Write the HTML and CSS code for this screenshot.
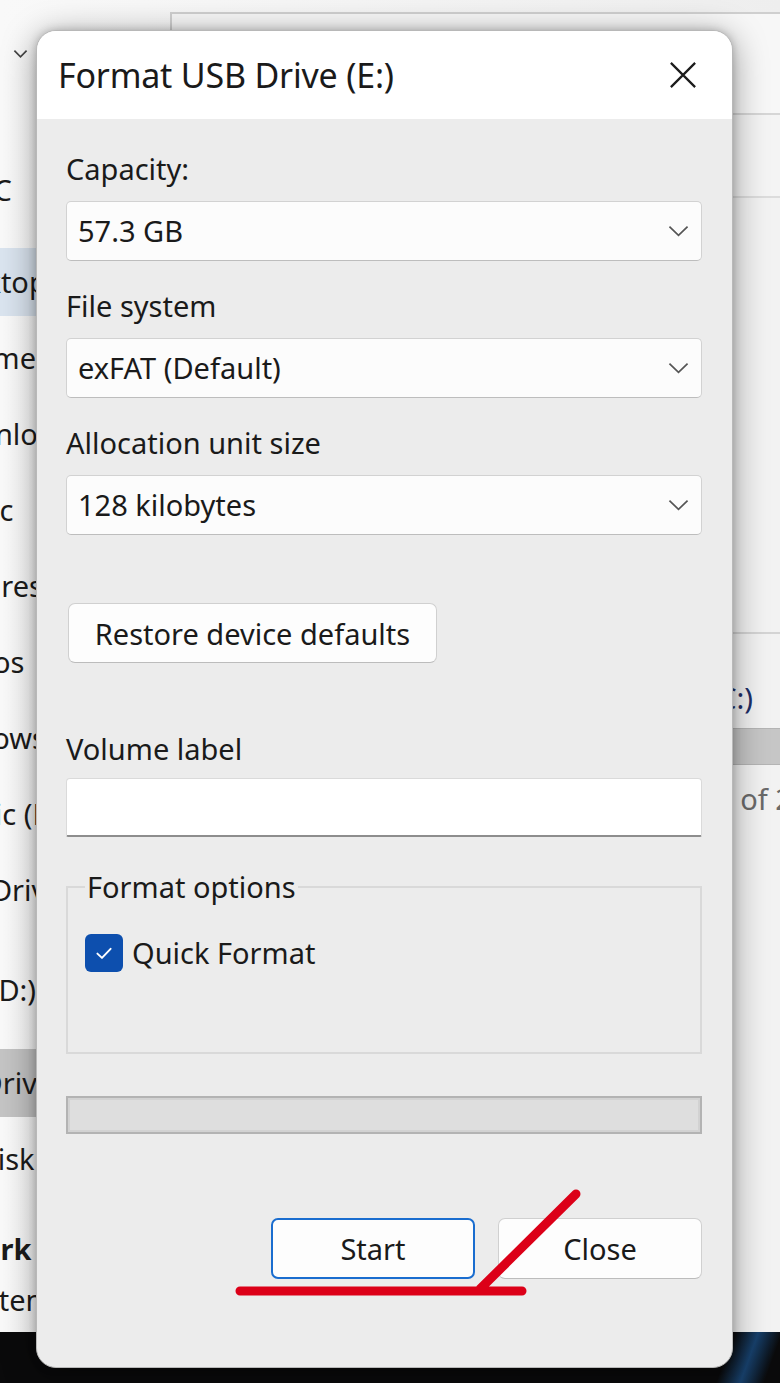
FILE: index.html
```html
<!DOCTYPE html>
<html>
  <head>
    <meta charset="utf-8" />
    <link rel="stylesheet" href="styles.css">
  </head>
  <body>
    <div class="screen">
      <div class="explorer">
        <div class="ex-main">
          <nav class="sidebar">
            <div class="nav-chev">
              <svg viewBox="0 0 16 10"><path d="M1.5 1.5L8 8l6.5-6.5" /></svg>
            </div>
            <div class="nav-item first pull-l">This PC</div>
            <div class="nav-item selected">Desktop</div>
            <div class="nav-item pull-s">Documents</div>
            <div class="nav-item">Downloads</div>
            <div class="nav-item">Music</div>
            <div class="nav-item">Pictures</div>
            <div class="nav-item">Videos</div>
            <div class="nav-item pull-s">Windows (C:)</div>
            <div class="nav-item">Public (D:)</div>
            <div class="nav-item">OneDrive</div>
            <div class="nav-gap"></div>
            <div class="nav-item pull-m">Data (D:)</div>
            <div class="nav-gap small"></div>
            <div class="nav-item current pull-m">USB Drive (E:)</div>
            <div class="nav-item pull-l">USB Disk</div>
            <div class="nav-gap small"></div>
            <div class="nav-item bold pull-xl">Network</div>
            <div class="status">122 items</div>
          </nav>
          <div class="pane">
            <div class="pane-toolbar"></div>
            <div class="pane-address"></div>
            <div class="pane-content">
              <div class="pane-section"></div>
              <div class="drive-tile">
                <div class="drive-name">Local Disk (C:)</div>
                <div class="drive-bar"></div>
                <div class="drive-free">15.2 GB free of 237 GB</div>
              </div>
            </div>
          </div>
        </div>
        <div class="taskbar"></div>
      </div>

      <div class="dialog">
        <div class="dlg-title">
          <span class="dlg-title-text">Format USB Drive (E:)</span>
          <svg class="dlg-close" viewBox="0 0 30 30">
            <path d="M2 2L28 28M28 2L2 28" />
          </svg>
        </div>

        <div class="dlg-body">
          <div class="field-label">Capacity:</div>
          <div class="select">
            <span>57.3 GB</span>
            <svg class="select-chev" viewBox="0 0 22 12"><path d="M1.5 1.5L11 10.5l9.5-9" /></svg>
          </div>

          <div class="field-label">File system</div>
          <div class="select">
            <span>exFAT (Default)</span>
            <svg class="select-chev" viewBox="0 0 22 12"><path d="M1.5 1.5L11 10.5l9.5-9" /></svg>
          </div>

          <div class="field-label">Allocation unit size</div>
          <div class="select">
            <span>128 kilobytes</span>
            <svg class="select-chev" viewBox="0 0 22 12"><path d="M1.5 1.5L11 10.5l9.5-9" /></svg>
          </div>

          <button class="btn restore">Restore device defaults</button>

          <div class="field-label volume">Volume label</div>
          <div class="textbox"></div>

          <fieldset class="options">
            <legend>Format options</legend>
            <label class="check">
              <span class="check-box">
                <svg viewBox="0 0 20 20"><path d="M4.5 10.5l3.8 3.6L15.5 6.5" /></svg>
              </span>
              Quick Format
            </label>
          </fieldset>

          <div class="progress"></div>

          <div class="actions">
            <button class="btn primary">Start</button>
            <button class="btn">Close</button>
          </div>
        </div>
      </div>

      <svg class="annotation" viewBox="0 0 780 1383">
        <path d="M240 1291H522M576 1194L480 1289" />
      </svg>
    </div>
  </body>
</html>
```

FILE: styles.css
```css
* {
  margin: 0;
  padding: 0;
  box-sizing: border-box;
}

body {
  width: 780px;
  height: 1383px;
  overflow: hidden;
  font-family: "Noto Sans", "Open Sans", sans-serif;
  color: #1b1b1b;
  background: #f3f3f3;
}

.screen {
  position: relative;
  width: 780px;
  height: 1383px;
  overflow: hidden;
}

/* explorer window behind the dialog */

.explorer {
  display: flex;
  flex-direction: column;
  height: 100%;
  background: linear-gradient(90deg, #f9f9f9 0%, #eeeeee 100%);
}

.ex-main {
  flex: 1;
  display: flex;
  min-height: 0;
}

.sidebar {
  flex: none;
  width: 236px;
  margin-left: -66px;
  display: flex;
  flex-direction: column;
  font-size: 29px;
  line-height: 40px;
  color: #1b1b1b;
}

.nav-chev {
  height: 156px;
  padding: 28px 0 0 79px;
}

.nav-chev svg {
  width: 15px;
  height: 10px;
  fill: none;
  stroke: #444;
  stroke-width: 1.8;
}

.nav-item {
  height: 68px;
  margin-bottom: 8px;
  display: flex;
  align-items: center;
  white-space: nowrap;
}

.nav-item.first {
  margin-bottom: 24px;
}

.nav-item.pull-s {
  text-indent: -12px;
}

.nav-item.pull-m {
  text-indent: -16px;
}

.nav-item.pull-l {
  text-indent: -21px;
}

.nav-item.pull-xl {
  text-indent: -30px;
}

.nav-item.selected {
  background: #dae4ef;
}

.nav-item.current {
  background: #c4c4c4;
}

.nav-item.bold {
  font-weight: 700;
  height: 62px;
  margin-bottom: 0;
}

.nav-gap {
  height: 24px;
}

.nav-gap.small {
  height: 17px;
}

.status {
  white-space: nowrap;
}

.pane {
  flex: 1;
  min-width: 0;
  overflow: hidden;
  margin-top: 12px;
  border-top: 2px solid #cfcfcf;
  border-left: 2px solid #cfcfcf;
  background: #f7f7f7;
  display: flex;
  flex-direction: column;
}

.pane-toolbar {
  height: 101px;
  border-bottom: 2px solid #d6d6d6;
}

.pane-address {
  height: 83px;
  border-bottom: 2px solid #dcdcdc;
  background: #f4f4f4;
}

.pane-content {
  flex: 1;
  background: #f2f2f2;
}

.pane-section {
  height: 436px;
  border-bottom: 2px solid #d4d4d4;
}

.drive-tile {
  padding: 44px 0 0 394px;
  font-size: 29px;
  line-height: 40px;
  white-space: nowrap;
}

.drive-name {
  color: #1e2f66;
}

.drive-bar {
  width: 340px;
  height: 37px;
  margin: 10px 0 14px;
  background: #c6c6c6;
  border: 1px solid #b4b4b4;
}

.drive-free {
  color: #6a6a6a;
}

.taskbar {
  height: 51px;
  background: linear-gradient(110deg, #0a0a0b 92%, #17406b 95%, #0a0a0b 98%);
}

/* dialog */

.dialog {
  position: absolute;
  left: 36px;
  top: 30px;
  width: 697px;
  height: 1338px;
  background: #ececec;
  border: 1px solid #b8b8b8;
  border-radius: 20px;
  overflow: hidden;
  box-shadow: 0 6px 34px rgba(0, 0, 0, 0.4), 0 0 8px rgba(0, 0, 0, 0.2);
}

.dlg-title {
  height: 88px;
  background: #fff;
  display: flex;
  align-items: center;
  justify-content: space-between;
  padding: 0 35px 0 21px;
}

.dlg-title-text {
  font-size: 34px;
  letter-spacing: -0.2px;
  color: #1a1a1a;
}

.dlg-close {
  width: 28px;
  height: 28px;
  fill: none;
  stroke: #1c1c1c;
  stroke-width: 2.4;
}

.dlg-body {
  display: flex;
  flex-direction: column;
  align-items: flex-start;
  padding: 30px 30px 0 29px;
}

.field-label {
  font-size: 29px;
  line-height: 40px;
  margin-bottom: 12px;
  color: #1a1a1a;
}

.field-label.volume {
  margin-top: 66px;
  margin-bottom: 9px;
}

.select {
  width: 100%;
  height: 60px;
  margin-bottom: 25px;
  padding: 0 12px 0 11px;
  display: flex;
  align-items: center;
  justify-content: space-between;
  background: #fcfcfc;
  border: 1px solid #d2d2d2;
  border-bottom-color: #bdbdbd;
  border-radius: 5px;
  font-size: 29px;
  line-height: 40px;
  color: #1a1a1a;
}

.select span {
  margin-top: -1px;
}

.select-chev {
  width: 21px;
  height: 12px;
  fill: none;
  stroke: #555;
  stroke-width: 1.8;
}

.btn {
  font-family: inherit;
  font-size: 29px;
  color: #1a1a1a;
  height: 61px;
  background: #fdfdfd;
  border: 1px solid #d0d0d0;
  border-bottom-color: #bcbcbc;
  border-radius: 7px;
}

.btn.restore {
  margin: 43px 0 0 2px;
  width: 369px;
  height: 60px;
}

.textbox {
  width: 100%;
  height: 59px;
  background: #fff;
  border: 1px solid #dadada;
  border-bottom: 2px solid #8d8d8d;
  border-radius: 4px 4px 2px 2px;
}

.options {
  width: 100%;
  margin-top: 30px;
  height: 187px;
  border: 2px solid #d9d9d9;
  padding: 0 20px 0 17px;
}

.options legend {
  font-size: 29px;
  line-height: 40px;
  padding: 0 2px;
  color: #1a1a1a;
}

.check {
  display: flex;
  align-items: center;
  gap: 9px;
  margin-top: 27px;
  font-size: 29px;
  line-height: 38px;
  color: #1a1a1a;
}

.check-box {
  width: 38px;
  height: 38px;
  border-radius: 6px;
  background: #0d4fae;
  display: flex;
  align-items: center;
  justify-content: center;
}

.check-box svg {
  width: 24px;
  height: 24px;
  fill: none;
  stroke: #fff;
  stroke-width: 1.6;
  stroke-linecap: round;
  stroke-linejoin: round;
}

.progress {
  width: 100%;
  height: 38px;
  margin-top: 42px;
  background: #dedede;
  border: 2px solid #b3b3b3;
  box-shadow: inset 0 0 0 2px #d2d2d2;
}

.actions {
  align-self: flex-end;
  display: flex;
  gap: 23px;
  margin-top: 84px;
}

.actions .btn {
  width: 204px;
}

.btn.primary {
  border: 2px solid #1a6dcf;
  background: #fdfdfd;
}

/* red hand-drawn mark */

.annotation {
  position: absolute;
  left: 0;
  top: 0;
  width: 780px;
  height: 1383px;
  pointer-events: none;
  fill: none;
  stroke: #dc0018;
  stroke-width: 9;
  stroke-linecap: round;
  stroke-linejoin: round;
}
```
